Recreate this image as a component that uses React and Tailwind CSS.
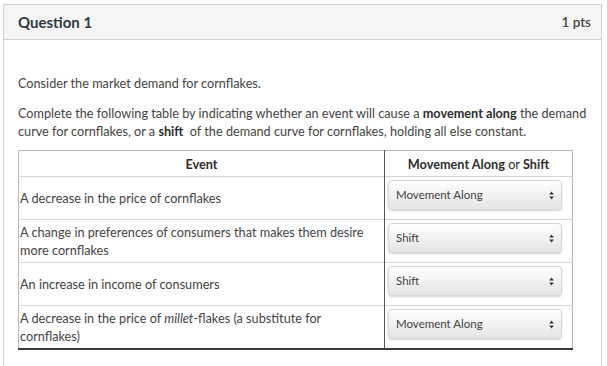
import React from "react";

const rows = [
  { event: <>A decrease in the price of cornflakes</>, answer: "Movement Along" },
  {
    event: <>A change in preferences of consumers that makes them desire more cornflakes</>,
    answer: "Shift",
  },
  { event: <>An increase in income of consumers</>, answer: "Shift" },
  {
    event: (
      <>
        A decrease in the price of <em>millet</em>-flakes (a substitute for cornflakes)
      </>
    ),
    answer: "Movement Along",
  },
];

function SelectBox({ value }) {
  return (
    <div className="mb-[9px] flex h-[30px] w-[174px] items-center justify-between rounded-[4px] border border-[#d6d6d6] bg-gradient-to-b from-white to-[#e4e4e4] pl-[7px] pr-[7px] text-[11.5px] text-[#444] shadow-[0_1px_2px_rgba(0,0,0,0.18)]">
      <span>{value}</span>
      <svg width="5" height="9" viewBox="0 0 5 9">
        <path d="M2.5 0.5 L4.8 3.6 L0.2 3.6 Z" fill="#333" />
        <path d="M2.5 8.5 L4.8 5.4 L0.2 5.4 Z" fill="#333" />
      </svg>
    </div>
  );
}

export default function App() {
  return (
    <div className="h-[366px] w-[607px] overflow-hidden bg-white pl-[3px] pr-[5px] pt-[4px] font-['Lato','Open_Sans',sans-serif] text-[#2d3b45]">
      <div className="h-[400px] border-x border-t border-[#cdd2d6]">
        <div className="flex h-[35px] items-center justify-between border-b border-[#cdd2d6] bg-[#f5f5f5] pl-[14px] pr-[10px]">
          <span className="text-[15px] font-bold">Question 1</span>
          <span className="text-[13.5px] font-semibold text-[#444]">1 pts</span>
        </div>

        <div className="pl-[14px] pr-[10px] pt-[34px] text-[12.7px] leading-[18px] text-[#444]">
          <p>Consider the market demand for cornflakes.</p>
          <p className="mt-[12px]">
            Complete the following table by indicating whether an event will cause a{" "}
            <strong className="font-bold text-[#2d2d2d]">movement along</strong> the demand curve for
            cornflakes, or a <strong className="font-bold text-[#2d2d2d]">shift</strong>&nbsp; of the
            demand curve for cornflakes, holding all else constant.
          </p>

          <table className="mt-[10px] w-[555px] border-collapse border-x border-t border-[#b8b8b8]">
            <thead>
              <tr className="h-[26px] border-b border-[#d4d4d4]">
                <th className="w-[366px] border-r border-[#555] text-center font-bold text-[#2d2d2d]">
                  Event
                </th>
                <th className="text-center font-normal text-[#2d2d2d]">
                  <span className="font-bold">Movement Along</span> or <span className="font-bold">Shift</span>
                </th>
              </tr>
            </thead>
            <tbody className="border-b-2 border-[#3a3a3a]">
              {rows.map((row, i) => (
                <tr key={i} className={i < rows.length - 1 ? "border-b border-[#d4d4d4]" : ""}>
                  <td className="border-r border-[#555] py-[2px] pl-[1px] pr-[8px] align-middle">
                    {row.event}
                  </td>
                  <td className="pl-[3px] pt-[3px] align-middle">
                    <SelectBox value={row.answer} />
                  </td>
                </tr>
              ))}
            </tbody>
          </table>
        </div>
      </div>
    </div>
  );
}
